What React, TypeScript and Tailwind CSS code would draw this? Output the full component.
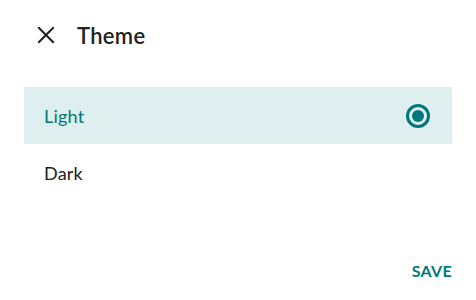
import React, {useState} from 'react';

const options = ['Light', 'Dark'];

const App: React.FC = () => {
    const [selected, setSelected] = useState('Light');

    return (
        <div className="w-[476px] h-[300px] bg-white flex flex-col font-['Lato',sans-serif] text-[#212121]">
            {/* Header */}
            <div className="flex items-center h-[70px] px-[37px] gap-[22px]">
                <button className="w-[18px] h-[18px] flex items-center justify-center">
                    <svg width="18" height="18" viewBox="0 0 18 18" fill="none">
                        <path d="M2 2L16 16M16 2L2 16" stroke="#212121" strokeWidth="2.1" strokeLinecap="square"/>
                    </svg>
                </button>
                <h1 className="text-[22px] font-semibold tracking-[0.3px]">Theme</h1>
            </div>

            {/* Options */}
            <div className="flex flex-col px-[24px] mt-[17px]">
                {options.map((opt) => {
                    const isActive = selected === opt;
                    return (
                        <div
                            key={opt}
                            onClick={() => setSelected(opt)}
                            className={`flex items-center justify-between h-[57px] pl-[20px] pr-[22px] cursor-pointer ${isActive ? 'bg-[#dfeeee] text-[#00787b]' : 'text-[#212121]'}`}
                        >
                            <span className="text-[18px] tracking-[0.2px] mt-[1px]">{opt}</span>
                            {isActive && (
                                <span className="w-[24px] h-[24px] rounded-full border-[3px] border-[#00787b] flex items-center justify-center">
                                    <span className="w-[12px] h-[12px] rounded-full bg-[#00787b]"/>
                                </span>
                            )}
                        </div>
                    );
                })}
            </div>

            {/* Footer */}
            <div className="flex-1 flex items-end justify-end px-[24px] pb-[17px]">
                <button className="text-[16px] font-bold text-[#00787b] tracking-[0.3px]">SAVE</button>
            </div>
        </div>
    );
};

export default App;
